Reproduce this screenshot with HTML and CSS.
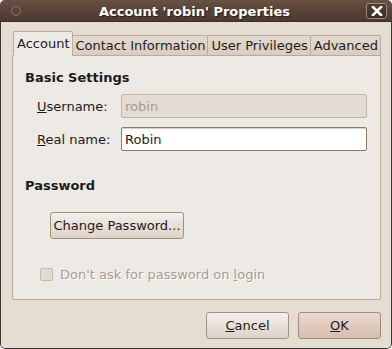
FILE: index.html
```html
<!DOCTYPE html>
<html>
<head>
<meta charset="utf-8">
<link rel="stylesheet" href="styles.css">
</head>
<body>
<div class="window">
  <div class="titlebar">
    <span class="win-circle"></span>
    <span class="title">Account 'robin' Properties</span>
    <span class="close-btn">
      <svg width="12" height="10" viewBox="0 0 12 10"><path d="M2 1 L10 9 M10 1 L2 9" stroke="#fff" stroke-width="2.6" stroke-linecap="square"/></svg>
    </span>
  </div>
  <div class="client">
    <div class="tabs">
      <div class="tab active">Account</div>
      <div class="tab">Contact Information</div>
      <div class="tab">User Privileges</div>
      <div class="tab">Advanced</div>
    </div>
    <div class="panel">
      <div class="heading">Basic Settings</div>
      <div class="field-row">
        <label class="label"><u>U</u>sername:</label>
        <div class="entry disabled">robin</div>
      </div>
      <div class="field-row second">
        <label class="label"><u>R</u>eal name:</label>
        <div class="entry">Robin</div>
      </div>
      <div class="heading pw">Password</div>
      <div class="btn-row">
        <div class="button change">Change Password...</div>
      </div>
      <div class="check-row">
        <span class="checkbox"></span>
        <span class="check-label">Don't ask for password on <u>l</u>ogin</span>
      </div>
    </div>
    <div class="actions">
      <div class="button dlg"><u>C</u>ancel</div>
      <div class="button dlg ok"><u>O</u>K</div>
    </div>
  </div>
</div>
</body>
</html>
```

FILE: styles.css
```css
html, body {
  margin: 0;
  padding: 0;
  background: #ffffff;
}
body {
  font-family: "DejaVu Sans", sans-serif;
  font-size: 13px;
  color: #1c1c1c;
}
.window {
  width: 392px;
  height: 349px;
  box-sizing: border-box;
  border-radius: 5px;
  overflow: hidden;
  display: flex;
  flex-direction: column;
  background: #e6ddd3;
}
.titlebar {
  height: 22px;
  flex: none;
  display: flex;
  align-items: center;
  background: linear-gradient(#6a5142 0%, #57433a 50%, #4a3a31 100%);
  border-bottom: 1px solid #3b2e26;
  box-sizing: border-box;
}
.win-circle {
  width: 8px;
  height: 8px;
  border-radius: 50%;
  border: 1px solid #8a7567;
  margin-left: 11px;
  margin-top: 1px;
  flex: none;
}
.title {
  flex: 1;
  text-align: center;
  color: #ffffff;
  font-weight: bold;
  font-size: 13px;
  text-shadow: 1px 1px 1px #2a1e17;
  margin-left: 2px;
  margin-top: 2px;
}
.close-btn {
  width: 21px;
  height: 16px;
  margin-right: 5px;
  margin-top: 1px;
  border: 1px solid #9a887b;
  border-radius: 3px;
  background: linear-gradient(#4f3d33, #3c2e26);
  display: flex;
  align-items: center;
  justify-content: center;
  box-sizing: border-box;
  flex: none;
}
.close-btn svg { display: block; }
.client {
  flex: 1;
  display: flex;
  flex-direction: column;
  padding: 9px 10px 0 11px;
  border-left: 1px solid #3d3530;
  border-right: 1px solid #3d3530;
  border-bottom: 1px solid #3d3530;
  border-radius: 0 0 5px 5px;
  box-sizing: border-box;
  background: #e5dcd2;
}
.tabs {
  display: flex;
  align-items: flex-end;
  height: 24px;
  padding-left: 1px;
  position: relative;
  z-index: 1;
}
.tab {
  height: 20px;
  box-sizing: border-box;
  padding: 0 2px 0 3px;
  display: flex;
  align-items: center;
  border: 1px solid #b9ab9d;
  border-bottom: none;
  border-left: none;
  border-radius: 0 2px 0 0;
  background: linear-gradient(#e3d9cf, #d9cdc1);
  color: #1c1c1c;
  white-space: nowrap;
}
.tab.active {
  padding: 0 2px 1px 3px;
  border-left: 1px solid #b9ab9d;
  border-radius: 2px 2px 0 0;
  background: #ede9e4;
  margin-bottom: -1px;
  height: 25px;
}
.panel {
  height: 245px;
  box-sizing: border-box;
  border: 1px solid #b9ab9d;
  border-radius: 0 0 2px 2px;
  background: #ede9e4;
  padding: 14px 13px 0 12px;
  display: flex;
  flex-direction: column;
}
.heading {
  font-weight: bold;
  height: 16px;
  line-height: 16px;
}
.heading.pw {
  margin-top: 27px;
}
.field-row {
  display: flex;
  align-items: center;
  margin-top: 8px;
  height: 24px;
}
.field-row.second {
  margin-top: 9px;
}
.label {
  width: 84px;
  padding-left: 12px;
  flex: none;
}
.entry {
  flex: 1;
  height: 24px;
  box-sizing: border-box;
  border: 1px solid #8d7c6d;
  border-radius: 2px;
  background: #ffffff;
  padding: 0 3px;
  display: flex;
  align-items: center;
  box-shadow: inset 0 1px 0 #d8d0c8;
}
.entry.disabled {
  background: #e4dcd3;
  border-color: #c3b5a7;
  color: #a89a8c;
  box-shadow: none;
}
.btn-row {
  display: flex;
  margin-top: 18px;
  padding-left: 25px;
}
.button {
  height: 27px;
  box-sizing: border-box;
  border: 1px solid #a3917f;
  border-radius: 3px;
  background: linear-gradient(#f3efeb 0%, #e8e0d8 50%, #ddd3c9 100%);
  display: flex;
  align-items: center;
  justify-content: center;
  color: #1c1c1c;
  white-space: nowrap;
}
.button.change {
  width: 134px;
}
.check-row {
  display: flex;
  align-items: center;
  margin-top: 28px;
  padding-left: 15px;
  color: #a89a8c;
  text-shadow: 1px 1px 0 #ffffff;
}
.checkbox {
  width: 11px;
  height: 11px;
  border: 1px solid #c7b9ab;
  border-radius: 2px;
  background: #e4dcd3;
  margin-right: 7px;
  flex: none;
}
.actions {
  display: flex;
  justify-content: flex-end;
  gap: 9px;
  margin-top: 12px;
}
.button.dlg {
  width: 83px;
}
.button.ok {
  background: linear-gradient(#ecd9cf 0%, #e1cbbf 50%, #d6bdaf 100%);
  border-color: #a08b7b;
}
```
